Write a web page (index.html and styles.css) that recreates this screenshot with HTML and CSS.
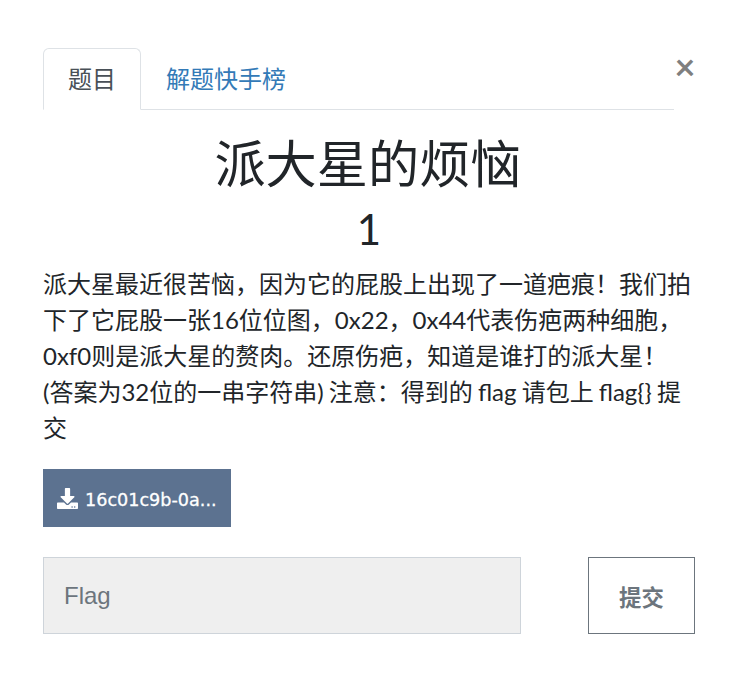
FILE: index.html
```html
<!DOCTYPE html>
<html lang="zh">
<head>
<meta charset="utf-8">
<title>派大星的烦恼</title>
<link rel="stylesheet" href="styles.css">
</head>
<body>
<div class="modal">
  <button class="close" aria-label="Close">×</button>
  <ul class="tabs">
    <li class="tab active">题目</li>
    <li class="tab">解题快手榜</li>
  </ul>
  <h1 class="title">派大星的烦恼</h1>
  <div class="value">1</div>
  <p class="desc">派大星最近很苦恼，因为它的屁股上出现了一道疤痕！我们拍下了它屁股一张16位位图，0x22，0x44代表伤疤两种细胞，0xf0则是派大星的赘肉。还原伤疤，知道是谁打的派大星！(答案为32位的一串字符串) 注意：得到的 flag 请包上 flag{} 提交</p>
  <a class="download">
    <svg class="dl-icon" viewBox="0 0 512 512" width="21" height="21"><path fill="#fff" d="M216 0h80c13.300 0 24 10.700 24 24v168h87.700c17.800 0 26.700 21.500 14.100 34.100L269.700 378.300c-7.500 7.500-19.800 7.500-27.300 0L90.100 226.100c-12.600-12.600-3.700-34.100 14.100-34.100H192V24c0-13.300 10.700-24 24-24zm296 376v112c0 13.300-10.700 24-24 24H24c-13.300 0-24-10.700-24-24V376c0-13.300 10.700-24 24-24h146.700l49 49c20.100 20.100 52.500 20.100 72.600 0l49-49H488c13.300 0 24 10.700 24 24zm-124 88c0-11-9-20-20-20s-20 9-20 20 9 20 20 20 20-9 20-20zm64 0c0-11-9-20-20-20s-20 9-20 20 9 20 20 20 20-9 20-20z"/></svg>
    <span class="file">16c01c9b-0a...</span>
  </a>
  <form class="flag-row">
    <input class="flag-input" placeholder="Flag">
    <button class="submit" type="button">提交</button>
  </form>
</div>
</body>
</html>
```
FILE: styles.css
```css
* { box-sizing: border-box; }
html, body { margin: 0; padding: 0; background: #fff; }
body {
  font-family: Lato, "Noto Sans CJK SC", sans-serif;
  color: #212529;
  font-variant-ligatures: common-ligatures;
  text-rendering: optimizeLegibility;
}
.modal {
  position: relative;
  width: 738px;
  height: 700px;
  padding: 48px 43px 0;
}
.close {
  position: absolute;
  top: 46px;
  left: 673px;
  padding: 0;
  width: 24px;
  height: 40px;
  border: 0;
  background: none;
  font: 700 36px/40px Lato, sans-serif;
  color: #7f7f7f;
  text-align: center;
}
.tabs {
  display: flex;
  list-style: none;
  margin: 0 21px 0 0;
  padding: 0;
  border-bottom: 1px solid #dee2e6;
  height: 62px;
}
.tab {
  padding: 0 25px;
  font-size: 24px;
  line-height: 62px;
  color: #337ab7;
}
.tab.active {
  height: 62px;
  padding: 0 24px;
  color: #495057;
  background: #fff;
  border: 1px solid #dee2e6;
  border-bottom-color: #fff;
  border-radius: 6px 6px 0 0;
  line-height: 60px;
}
.title {
  margin: 22px 2px 0 0;
  font-size: 51.2px;
  font-weight: 400;
  line-height: 62px;
  text-align: center;
}
.value {
  margin-top: 11px;
  font-size: 42px;
  line-height: 48px;
  text-align: center;
}
.desc {
  margin: 13px 0 0;
  font-size: 24px;
  line-height: 36px;
  word-spacing: -1px;
}
.download {
  display: flex;
  align-items: center;
  gap: 7px;
  width: 188px;
  height: 58px;
  margin-top: 23px;
  padding-left: 14px;
  background: #5c7290;
  color: #fff;
}
.dl-icon { flex: none; }
.file {
  padding-top: 3px;
  font-family: "DejaVu Sans", sans-serif;
  font-size: 17.6px;
  -webkit-text-stroke: 0.3px #fff;
}
.flag-row {
  display: flex;
  justify-content: space-between;
  margin-top: 30px;
}
.flag-input {
  width: 478px;
  height: 77px;
  padding: 0 20px;
  background: #efefef;
  border: 1px solid #ced4da;
  font-family: "Liberation Sans", sans-serif;
  font-size: 24px;
  color: #495057;
}
.flag-input::placeholder { color: #6c757d; opacity: 1; }
.submit {
  width: 107px;
  height: 77px;
  padding: 0;
  background: #fff;
  border: 1px solid #6c757d;
  font-family: Lato, "Noto Sans CJK SC", sans-serif;
  font-size: 22.4px;
  font-weight: 700;
  color: #6c757d;
}
```
